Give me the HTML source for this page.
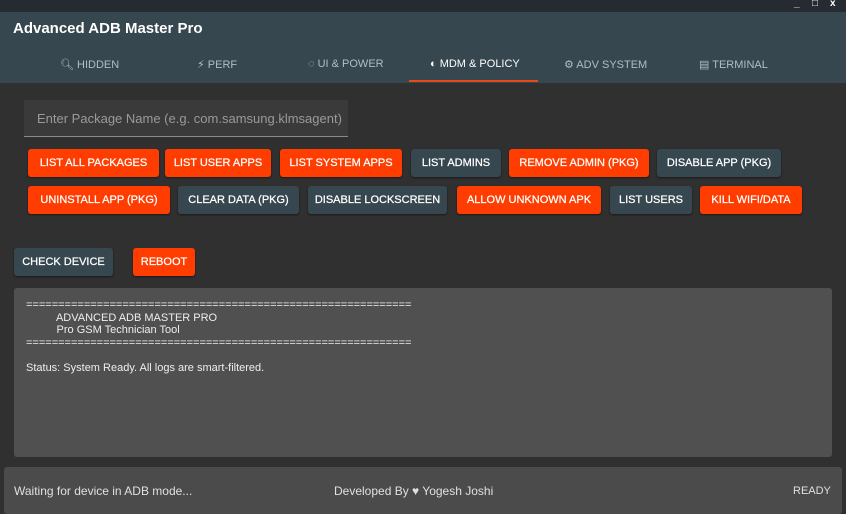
<!DOCTYPE html>
<html><head><meta charset="utf-8"><style>
*{margin:0;padding:0;box-sizing:border-box}
body{width:846px;height:514px;background:#303030;font-family:"Liberation Sans",sans-serif;position:relative;overflow:hidden;color:#fff}
.top{position:absolute;left:0;top:0;width:846px;height:12px;background:#252b30}
.wc{position:absolute;top:-2px;font-size:10px;color:#fff;font-weight:bold}
.hdr{position:absolute;left:0;top:12px;width:846px;height:71px;background:#37474f}
.title{position:absolute;left:13px;top:20px;font-size:15px;font-weight:bold}
.tab{position:absolute;top:58px;font-size:11px;color:#b0bec5}
.ul{position:absolute;left:409px;top:80px;width:129px;height:2px;background:#e64a19}
.inp{position:absolute;left:24px;top:100px;width:324px;height:37px;background:#3a3a3a;border-bottom:1px solid #8a8a8a;color:#9a9a9a;font-size:13px;padding:11px 0 0 13px}
.b{position:absolute;height:28px;border-radius:3px;font-size:11px;line-height:28px;text-align:center;color:#fff;box-shadow:0 1px 2px rgba(0,0,0,.5);-webkit-text-stroke:0.25px #fff}
.o{background:#ff3d00}.d{background:#37474f}
.log{position:absolute;left:14px;top:288px;width:818px;height:169px;background:#505050;border-radius:3px;font-size:11px;color:#eee;line-height:12.5px;padding:11px 0 0 12px;white-space:pre}
.foot{position:absolute;left:4px;top:467px;width:838px;height:47px;background:#4b4b4b;border-radius:3px;font-size:12px;color:#e0e0e0}
</style></head><body>
<div class="top"></div>
<div class="wc" style="left:794px">_</div><div class="wc" style="left:812px">□</div><div class="wc" style="left:830px">x</div>
<div class="hdr"></div>
<div class="title">Advanced ADB Master Pro</div>
<div class="tab" style="left:60px">🔍︎ HIDDEN</div>
<div class="tab" style="left:197px">⚡︎ PERF</div>
<div class="tab" style="left:308px">◌ UI &amp; POWER</div>
<div class="tab" style="left:430px;color:#fff">◐ MDM &amp; POLICY</div>
<div class="tab" style="left:564px">⚙︎ ADV SYSTEM</div>
<div class="tab" style="left:699px">▤ TERMINAL</div>
<div class="ul"></div>
<div class="inp">Enter Package Name (e.g. com.samsung.klmsagent)</div>
<div class="b o" style="left:28px;top:149px;width:131px">LIST ALL PACKAGES</div>
<div class="b o" style="left:165px;top:149px;width:106px">LIST USER APPS</div>
<div class="b o" style="left:280px;top:149px;width:122px">LIST SYSTEM APPS</div>
<div class="b d" style="left:411px;top:149px;width:90px">LIST ADMINS</div>
<div class="b o" style="left:509px;top:149px;width:140px">REMOVE ADMIN (PKG)</div>
<div class="b d" style="left:657px;top:149px;width:124px">DISABLE APP (PKG)</div>
<div class="b o" style="left:28px;top:186px;width:142px">UNINSTALL APP (PKG)</div>
<div class="b d" style="left:178px;top:186px;width:121px">CLEAR DATA (PKG)</div>
<div class="b d" style="left:308px;top:186px;width:139px">DISABLE LOCKSCREEN</div>
<div class="b o" style="left:457px;top:186px;width:144px">ALLOW UNKNOWN APK</div>
<div class="b d" style="left:610px;top:186px;width:82px">LIST USERS</div>
<div class="b o" style="left:700px;top:186px;width:102px">KILL WIFI/DATA</div>
<div class="b d" style="left:14px;top:248px;width:99px">CHECK DEVICE</div>
<div class="b o" style="left:133px;top:248px;width:62px">REBOOT</div>
<div class="log">============================================================
          ADVANCED ADB MASTER PRO
          Pro GSM Technician Tool
============================================================

Status: System Ready. All logs are smart-filtered.</div>
<div class="foot">
<span style="position:absolute;left:10px;top:17px">Waiting for device in ADB mode...</span>
<span style="position:absolute;left:330px;top:17px">Developed By ♥ Yogesh Joshi</span>
<span style="position:absolute;left:789px;top:18px;font-size:11px">READY</span>
</div>
</body></html>
